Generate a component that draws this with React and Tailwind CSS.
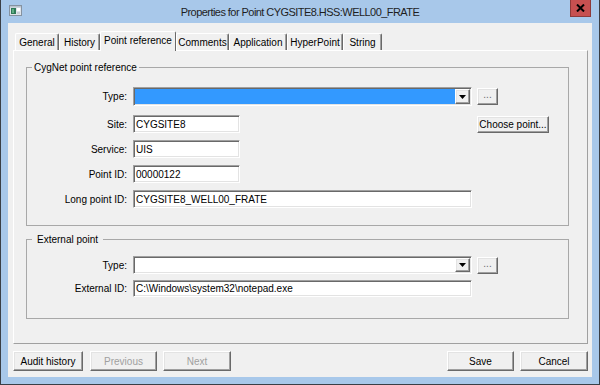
import React from "react";

const sunken =
  "border border-t-[#a0a0a0] border-l-[#a0a0a0] border-r-white border-b-white shadow-[inset_1px_1px_0_#696969,inset_-1px_-1px_0_#e3e3e3] bg-white";
const raised =
  "border border-t-white border-l-white border-r-[#696969] border-b-[#696969] shadow-[inset_-1px_-1px_0_#a0a0a0,inset_1px_1px_0_#e3e3e3] bg-[#f0f0f0]";

function Tri() {
  return (
    <svg width="7" height="4" viewBox="0 0 7 4">
      <path d="M0 0H7L3.5 4Z" fill="#000" />
    </svg>
  );
}

function Combo({ selected, h }) {
  return (
    <div className={`${sunken} ${h} w-[339px] flex p-[1px]`}>
      <div className={`flex-1 ${selected ? "bg-[#3399ff]" : "bg-white"}`} />
      <div className={`${raised} w-[15px] flex items-center justify-center`}>
        <Tri />
      </div>
    </div>
  );
}

function Dots() {
  return (
    <div
      className={`${raised} ml-[5px] w-[21px] h-[17px] flex items-center justify-center text-[#6d6d6d] leading-none pb-[3px]`}
    >
      ...
    </div>
  );
}

function Field({ w, h = "h-[18px]", children }) {
  return (
    <div className={`${sunken} ${w} ${h} flex items-center px-[2px] whitespace-nowrap`}>
      {children}
    </div>
  );
}

function Row({ label, className = "", children }) {
  return (
    <div className={`flex items-center ${className}`}>
      <div className="w-[100px] text-right whitespace-nowrap">{label}</div>
      <div className="ml-[6px] flex items-center">{children}</div>
    </div>
  );
}

function Tab({ w, label, selected }) {
  if (selected) {
    return (
      <div
        className={`${w} h-[20px] -mb-[1px] relative z-10 bg-[#f0f0f0] border-t border-l border-r border-t-white border-l-white border-r-[#696969] rounded-t-[2px] flex items-center justify-center pb-[3px] whitespace-nowrap`}
      >
        {label}
      </div>
    );
  }
  return (
    <div
      className={`${w} h-[17px] bg-[#f0f0f0] border-t border-l border-r border-t-white border-l-white border-r-[#696969] shadow-[inset_-1px_0_0_#a0a0a0] rounded-t-[2px] flex items-center justify-center whitespace-nowrap`}
    >
      {label}
    </div>
  );
}

function Btn({ w, children, disabled }) {
  return (
    <div
      className={`${raised} ${w} h-[20px] flex items-center justify-center ${
        disabled ? "text-[#a0a0a0]" : "text-black"
      }`}
    >
      {children}
    </div>
  );
}

export default function App() {
  return (
    <div className="w-[600px] h-[385px] bg-[#a8c8ea] border-l border-r border-b border-[#3a3f46] flex flex-col font-['Liberation_Sans',Arial,sans-serif] text-[10px] text-black">
      {/* Title bar */}
      <div className="h-[23px] grid grid-cols-[1fr_auto_1fr] items-start shrink-0">
        <div className="pl-[8px] pt-[5px]">
          <svg width="13" height="11" viewBox="0 0 13 11">
            <rect x="0.5" y="0.5" width="12" height="10" fill="#dfe4ea" stroke="#8592a0" />
            <rect x="1" y="1" width="11" height="1.5" fill="#b9c3ce" />
            <rect x="2" y="3" width="5" height="6" fill="#2f7a58" />
            <rect x="3" y="4" width="2" height="4" fill="#5fae85" />
            <rect x="8" y="3" width="3" height="3" fill="#ffffff" />
            <rect x="8" y="7" width="3" height="2" fill="#c8ced6" />
          </svg>
        </div>
        <div className="pt-[5px] text-[11px] tracking-[-0.55px] text-[#1e1e1e] whitespace-nowrap leading-[14px]">
          Properties for Point CYGSITE8.HSS:WELL00_FRATE
        </div>
        <div className="flex justify-end pr-[8px]">
          <div className="w-[21px] h-[17px] bg-[#c75050] border border-t-0 border-[#8e3a3a] flex items-center justify-center">
            <svg width="9" height="8" viewBox="0 0 9 8">
              <path d="M1 0.5L8 7.5M8 0.5L1 7.5" stroke="#000" strokeWidth="2" />
            </svg>
          </div>
        </div>
      </div>

      {/* Client area */}
      <div className="flex-1 ml-[7px] mr-[7px] mb-[7px] bg-[#f0f0f0] flex flex-col">
        {/* Tabs */}
        <div className="ml-[7px] mt-[8px] h-[19px] flex items-end shrink-0">
          <Tab w="w-[44px]" label="General" />
          <Tab w="w-[41px]" label="History" />
          <Tab w="w-[76px]" label="Point reference" selected />
          <Tab w="w-[53px]" label="Comments" />
          <Tab w="w-[58px]" label="Application" />
          <Tab w="w-[56px]" label="HyperPoint" />
          <Tab w="w-[39px]" label="String" />
        </div>

        {/* Panel */}
        <div className="ml-[5px] mr-[4px] h-[294px] shrink-0 border border-t-white border-l-white border-r-[#a0a0a0] border-b-[#a0a0a0] pl-[12px] pr-[18px] flex flex-col">
          <fieldset className="mt-[10px] border border-[#a8a8a8] pt-[13px] pb-[17px]">
            <legend className="ml-[5px] px-[2px] leading-[13px]">CygNet point reference</legend>
            <Row label="Type:" className="h-[19px]">
              <Combo selected h="h-[19px]" />
              <Dots />
            </Row>
            <Row label="Site:" className="h-[18px] mt-[9px]">
              <div className="w-[339px]">
                <Field w="w-[107px]">CYGSITE8</Field>
              </div>
              <div className={`${raised} ml-[5px] w-[72px] h-[17px] flex items-center justify-center`}>
                Choose point...
              </div>
            </Row>
            <Row label="Service:" className="h-[18px] mt-[7px]">
              <Field w="w-[107px]">UIS</Field>
            </Row>
            <Row label="Point ID:" className="h-[18px] mt-[7px]">
              <Field w="w-[107px]">00000122</Field>
            </Row>
            <Row label="Long point ID:" className="h-[18px] mt-[7px]">
              <Field w="w-[339px]">CYGSITE8_WELL00_FRATE</Field>
            </Row>
          </fieldset>

          <fieldset className="mt-[7px] border border-[#a8a8a8] pt-[10px] pb-[21px]">
            <legend className="ml-[5px] px-[5px] leading-[13px]">External point</legend>
            <Row label="Type:" className="h-[18px]">
              <Combo h="h-[18px]" />
              <Dots />
            </Row>
            <Row label="External ID:" className="h-[17px] mt-[6px]">
              <Field w="w-[339px]" h="h-[17px]">
                C:\Windows\system32\notepad.exe
              </Field>
            </Row>
          </fieldset>
        </div>

        {/* Buttons */}
        <div className="mt-[7px] ml-[5px] mr-[4px] flex items-center">
          <Btn w="w-[70px]">Audit history</Btn>
          <div className="ml-[7px]">
            <Btn w="w-[67px]" disabled>
              Previous
            </Btn>
          </div>
          <div className="ml-[6px]">
            <Btn w="w-[68px]" disabled>
              Next
            </Btn>
          </div>
          <div className="flex-1" />
          <Btn w="w-[67px]">Save</Btn>
          <div className="ml-[6px]">
            <Btn w="w-[68px]">Cancel</Btn>
          </div>
        </div>
      </div>
    </div>
  );
}
